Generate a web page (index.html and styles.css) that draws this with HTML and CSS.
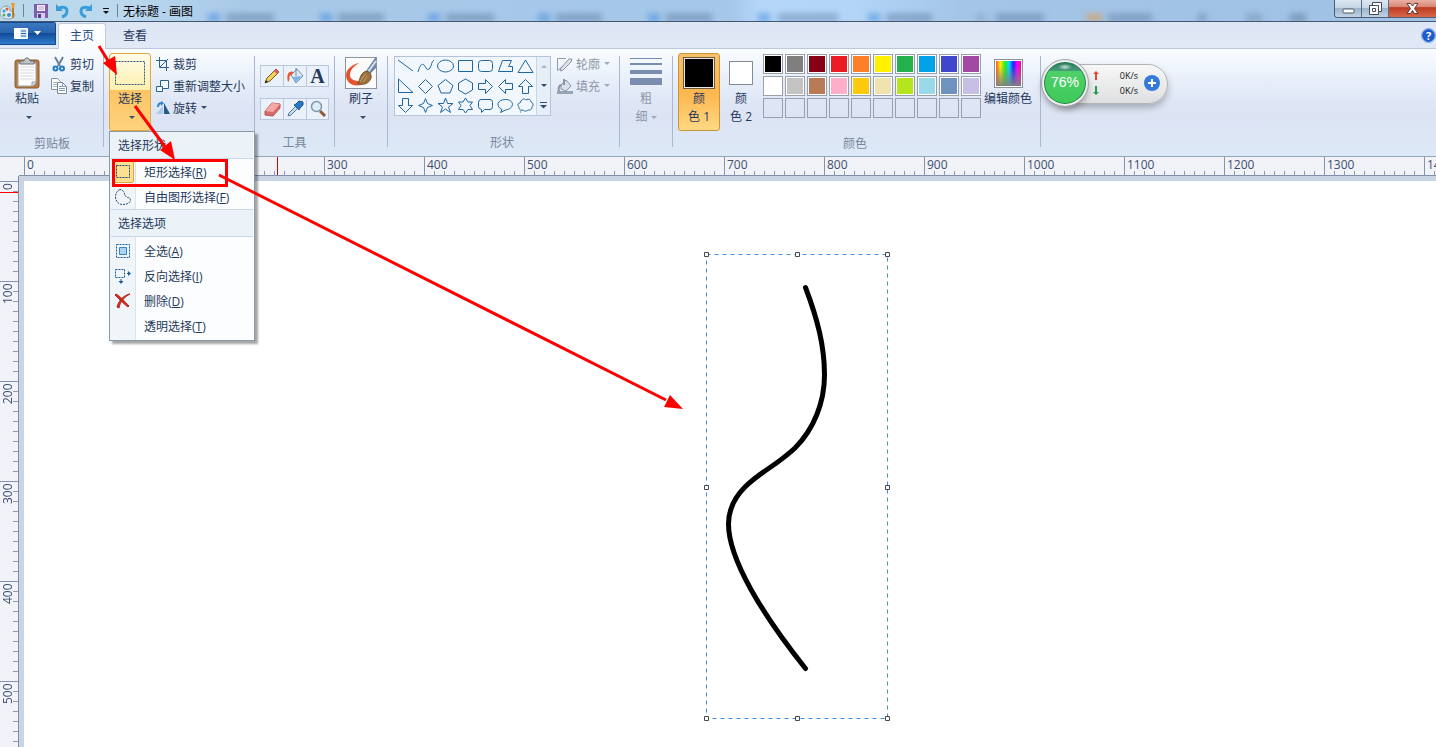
FILE: index.html
```html
<!DOCTYPE html>
<html lang="zh-CN">
<head>
    <meta charset="UTF-8">
    <meta name="viewport" content="width=device-width, initial-scale=1.0">
    <title>无标题 - 画图</title>
    <link rel="stylesheet" href="styles.css">
</head>
<body>
    <header class="titlebar">
        <div class="glass" id="glass"></div>
        <div class="quick">
            <svg class="app-icon" width="16" height="18" viewBox="0 0 16 18">
                <path d="M7 4C2 4 0 8 0 11c0 4 4 6 8 6 5 0 7-3 6-6-1-2-4-1-4-3 0-3-1-4-3-4z" fill="#dce9ef" stroke="#7fa0ae"/>
                <circle cx="4" cy="9" r="1.6" fill="#34a5d8"/><circle cx="7" cy="7" r="1.5" fill="#e2543c"/>
                <circle cx="4" cy="13" r="1.5" fill="#5cb050"/><circle cx="9" cy="13" r="2" fill="#3c8fd0"/>
                <path d="M13 3v13" stroke="#c97a20" stroke-width="2"/><path d="M11 1h4l-1 5h-2z" fill="#ef9b35"/>
            </svg>
            <span class="divider"></span>
            <button class="quick-btn" aria-label="保存">
                <svg width="14" height="14" viewBox="0 0 14 14">
                    <path d="M0 0h14v14H1L0 13z" fill="#7e5cae"/><path d="M3 1h8v6H3z" fill="#f2effa"/>
                    <path d="M4 3h6M4 5h6" stroke="#b7a8d4"/><path d="M3 9h8v5H3z" fill="#d7cdea"/><path d="M4 10h3v4H4z" fill="#574085"/>
                </svg>
            </button>
            <button class="quick-btn" aria-label="撤消">
                <svg width="14" height="14" viewBox="0 0 14 14"><path d="M3 4c5-2 8 0 8 3 0 3-2 5-5 6" fill="none" stroke="#3b9cdb" stroke-width="3"/><path d="M0 0v7h7z" fill="#3b9cdb"/></svg>
            </button>
            <button class="quick-btn" aria-label="重做">
                <svg width="14" height="14" viewBox="0 0 14 14"><path d="M11 4C6 2 3 4 3 7c0 3 2 5 5 6" fill="none" stroke="#3b9cdb" stroke-width="3"/><path d="M14 0v7H7z" fill="#3b9cdb"/></svg>
            </button>
            <button class="quick-btn quick-more" aria-label="自定义快速访问工具栏">
                <svg width="8" height="6" viewBox="0 0 8 6"><path d="M1 .5h6" stroke="#111"/><path d="M1 3h6L4 6z" fill="#111"/></svg>
            </button>
            <span class="divider"></span>
        </div>
        <h1 class="title">无标题 - 画图</h1>
        <div class="window-buttons">
            <button aria-label="最小化"><svg width="13" height="6"><rect x="1" y="1" width="11" height="4" rx="1" fill="#fff" stroke="#555d6b"/></svg></button>
            <button aria-label="还原"><svg width="13" height="13"><path d="M3.500.5h9v9h-3v3h-9v-9h3z" fill="#fff" stroke="#444c58"/><path d="M3.500 6.500h3v3h-3zM3 3.500h6.500V9" fill="none" stroke="#444c58"/></svg></button>
            <button class="close" aria-label="关闭"><svg width="13" height="11"><path d="M1 .500h3.500l2 2.500 2-2.500H12L8.500 5.500l3.500 5H8.500l-2-3-2 3H1l3.500-5z" fill="#fff" stroke="#5b3a3c"/></svg></button>
        </div>
    </header>

    <nav class="tabs">
        <button class="file-btn" aria-label="画图">
            <svg width="28" height="13" viewBox="0 0 28 13">
                <path d="M.5 1.500h13v10H.5z" fill="#dcecfb" stroke="#fff"/><path d="M1 2h5v9H1z" fill="#fff"/>
                <path d="M7 4h5M7 6.500h5M7 9h5" stroke="#2a65ad"/><path d="M20 4h7l-3.500 4z" fill="#fff"/>
            </svg>
        </button>
        <button class="tab active">主页</button>
        <button class="tab">查看</button>
        <button class="help" aria-label="帮助">?</button>
    </nav>

    <section class="ribbon">
        <div class="group clipboard">
            <div class="group-body">
                <button class="big">
                    <span class="big-icon">
                        <svg width="26" height="32" viewBox="0 0 26 32">
                            <rect x="1" y="3" width="24" height="28" rx="2" fill="#b67a3c" stroke="#8d5c2c"/>
                            <path d="M4 6h18v20l-3 3H4z" fill="#fdfdfd" stroke="#9aa3ad"/><path d="M22 25h-4v4" fill="#ccd5df" stroke="#9aa3ad"/>
                            <path d="M6 10h14M6 13h14M6 16h14M6 19h14M6 22h14" stroke="#d5dae2"/>
                            <path d="M6 4h4c0-4 6-4 6 0h4v3H6z" fill="#bfc4c9" stroke="#6b7076"/>
                        </svg>
                    </span>
                    <span>粘贴</span>
                    <span class="arrow"></span>
                </button>
                <div class="rows">
                    <button class="row"><svg width="16" height="16" viewBox="0 0 16 16"><path d="M4 1l5 9M12 1L7 10" stroke="#68829b" stroke-width="2"/><circle cx="4.500" cy="12.500" r="2" fill="none" stroke="#247cc2" stroke-width="2"/><circle cx="11" cy="12.500" r="2" fill="none" stroke="#247cc2" stroke-width="2"/></svg>剪切</button>
                    <button class="row"><svg width="16" height="16" viewBox="0 0 16 16"><path d="M.5.5h6l3 3v8h-9z" fill="#fff" stroke="#8792a0"/><path d="M2 4.500h4M2 6.500h4M2 8.500h4" stroke="#9fb7d4"/><path d="M6.500 4.500h5l4 4v7h-9z" fill="#fff" stroke="#7c8897"/><path d="M11.500 4.500v4h4M8 8.500h3M8 10.500h6M8 12.500h6" fill="none" stroke="#7f9bbd"/></svg>复制</button>
                </div>
            </div>
            <div class="group-label">剪贴板</div>
        </div>

        <div class="group image">
            <div class="group-body">
                <div class="dropdown">
                    <button class="big select-btn" aria-expanded="true">
                        <span class="big-icon"><svg width="32" height="26"><rect x="1.500" y="1.500" width="29" height="23" fill="none" stroke="#33567f" stroke-dasharray="2 1"/></svg></span>
                        <span>选择</span>
                        <span class="arrow"></span>
                    </button>
                    <div class="menu">
                        <div class="menu-title">选择形状</div>
                        <button class="menu-item checked"><span class="menu-icon"><svg width="16" height="16"><path d="M1.500 1.500h13v12h-13z" fill="none" stroke="#23486f" stroke-dasharray="2 1"/></svg></span><span>矩形选择(<u>R</u>)</span></button>
                        <button class="menu-item"><span class="menu-icon"><svg width="16" height="16"><path d="M5 .5C3 1 .5 4 .5 8c0 4 3 7.500 7 7.500 4 0 7-1 8-4 0-2-1-3-3-3-3-1-2-3-4-6-1-1-2-2-3.500-2z" fill="none" stroke="#23486f" stroke-dasharray="2 1"/></svg></span><span>自由图形选择(<u>F</u>)</span></button>
                        <div class="menu-title second">选择选项</div>
                        <button class="menu-item"><span class="menu-icon"><svg width="16" height="16"><path d="M1.500 1.500h13v13h-13z" fill="none" stroke="#1b5d9b" stroke-dasharray="2 1"/><path d="M4.500 4.500h7v7h-7z" fill="#a8d5f6" stroke="#3a83c2"/></svg></span><span>全选(<u>A</u>)</span></button>
                        <button class="menu-item"><span class="menu-icon"><svg width="16" height="16"><path d="M.5 1.500h9v8h-9z" fill="none" stroke="#1b5d9b" stroke-dasharray="2 1"/><path d="M12 5.500h2M6 11v3" stroke="#1b5d9b"/><path d="M13 3l3 2.500L13 8zM3.500 13h5L6 16z" fill="#1b5d9b"/></svg></span><span>反向选择(<u>I</u>)</span></button>
                        <button class="menu-item"><span class="menu-icon"><svg width="16" height="16"><path d="M1 1c4 2 9 8 13 12l-1 1C9 11 4 6 0 2zM15 1C9 4 5 9 4 15l-2-1C4 7 9 2 15 1z" fill="#d9311f" stroke="#b42318"/></svg></span><span>删除(<u>D</u>)</span></button>
                        <button class="menu-item"><span class="menu-icon"></span><span>透明选择(<u>T</u>)</span></button>
                    </div>
                </div>
                <div class="rows">
                    <button class="row"><svg width="14" height="14" viewBox="0 0 14 14"><path d="M3.500 0v10.500H13M0 3.500h10.500V14M4 10l8-8" fill="none" stroke="#2a6295"/></svg>裁剪</button>
                    <button class="row"><svg width="14" height="14" viewBox="0 0 14 14"><path d="M4.500 1.500h8v8h-8z" fill="#f4fafe" stroke="#2a6295"/><path d="M.5 7.500h6v5h-6z" fill="#f4fafe" stroke="#2a6295"/></svg>重新调整大小</button>
                    <button class="row"><svg width="14" height="14" viewBox="0 0 14 14"><path d="M0 13h7V5z" fill="#a9cbe8"/><path d="M8 2l6 11H8z" fill="#245b88"/><path d="M2 6c0-3 1-4 4-4" fill="none" stroke="#2f86cc" stroke-width="2"/><path d="M5 0l3 2-3 3z" fill="#2f86cc"/></svg>旋转<span class="arrow"></span></button>
                </div>
            </div>
        </div>

        <div class="group tools">
            <div class="group-body">
                <div class="toolbox">
                    <button aria-label="铅笔"><svg width="18" height="18" viewBox="0 0 18 18"><path d="M2 16l2-5L13 2l3 3-9 9z" fill="#f6cf55" stroke="#6e5b33"/><path d="M13 2l3 3-2 2-3-3z" fill="#d95d5d"/><path d="M2 16l1-3 2 2z" fill="#222"/></svg></button>
                    <button aria-label="填充"><svg width="18" height="18" viewBox="0 0 18 18"><path d="M5 8l6-6 6 7-7 7z" fill="#dfebf8" stroke="#6f8fb5"/><path d="M7 10l9-1-6 6z" fill="#7bb0e4"/><path d="M10 1v8" stroke="#7d8791" fill="none"/><path d="M8 5C3 3 0 7 2 15c3-3 0-5 3-7z" fill="#e65a2e"/></svg></button>
                    <button class="text-tool" aria-label="文本">A</button>
                    <button aria-label="橡皮擦"><svg width="18" height="18" viewBox="0 0 18 18"><path d="M2 11l7-8 8 1v4l-7 8-8-1z" fill="#d86c6c" stroke="#b45454"/><path d="M2 11l7-8 8 1-7 8z" fill="#f5a9a6"/></svg></button>
                    <button aria-label="颜色选取器"><svg width="18" height="18" viewBox="0 0 18 18"><path d="M2 16l1-3 7-7 2 2-7 7z" fill="#c9def0" stroke="#55789b"/><path d="M8 5l2-1 3-3 4 1v3l-3 3-1 2z" fill="#2877c5" stroke="#1b568f"/></svg></button>
                    <button aria-label="放大镜"><svg width="18" height="18" viewBox="0 0 18 18"><path d="M11 11l5 5" stroke="#8c5a34" stroke-width="3"/><circle cx="7.500" cy="6.500" r="5" fill="#dceefc" stroke="#8596a8" stroke-width="1.500"/></svg></button>
                </div>
            </div>
            <div class="group-label">工具</div>
        </div>

        <div class="group brush">
            <div class="group-body">
                <button class="big">
                    <span class="big-icon">
                        <svg width="32" height="32" viewBox="0 0 32 32">
                            <rect x=".5" y=".5" width="31" height="31" fill="#fbfbfb" stroke="#8d939b"/>
                            <path d="M14 6C8 7 1 12 1 18c0 7 6 12 15 10l-1-4c-6 0-10-2-10-6 0-5 4-9 9-12z" fill="#e4532c"/>
                            <path d="M21 14L30 1h1v10l-7 7z" fill="#6f86a7"/><path d="M23 15l8-11" stroke="#d5e0ec" stroke-width="2"/>
                            <path d="M13 27c2-3 1-8 6-12 4-2 8 1 7 6-2 6-8 7-13 6z" fill="#9b713d" stroke="#76532b"/><path d="M15 25c2-3 3-6 6-8M18 25c2-2 3-4 4-6" stroke="#c9a56c" fill="none"/>
                        </svg>
                    </span>
                    <span>刷子</span>
                    <span class="arrow"></span>
                </button>
            </div>
        </div>

        <div class="group shapes">
            <div class="group-body">
                <div class="gallery">
                    <div class="gallery-grid" id="shapes"></div>
                    <div class="gallery-scroll">
                        <button aria-label="上一行"><span class="arrow up"></span></button>
                        <button aria-label="下一行"><span class="arrow"></span></button>
                        <button aria-label="更多形状"><svg width="7" height="7"><path d="M0 .5h7" stroke="#344d70"/><path d="M0 3h7L3.500 6.500z" fill="#344d70"/></svg></button>
                    </div>
                </div>
                <div class="rows">
                    <button class="row" disabled><svg width="16" height="16" viewBox="0 0 16 16"><path d="M9 2.500H.5v12l5-4" fill="none" stroke="#8f9bad"/><path d="M4 12L12 3l3 0-1 3-8 8-3 1z" fill="#dfe4ec" stroke="#8793a6"/></svg>轮廓<span class="arrow"></span></button>
                    <button class="row" disabled><svg width="16" height="16" viewBox="0 0 16 16"><path d="M0 13h16v3H0z" fill="#97a3b6"/><path d="M4 7l5-5 5 6-5 5-5-2z" fill="#dbe1ea" stroke="#8793a6"/><path d="M7 1v6M5 7c-3 0-4 3-3 6" fill="none" stroke="#8793a6" stroke-width="2"/></svg>填充<span class="arrow"></span></button>
                </div>
            </div>
            <div class="group-label">形状</div>
        </div>

        <div class="group size">
            <div class="group-body">
                <button class="big" disabled>
                    <span class="big-icon"><svg width="32" height="32"><path d="M0 1h32v1H0zM0 6h32v2H0zM0 13h32v4H0zM0 21h32v7H0z" fill="#7a8dae"/></svg></span>
                    <span>粗</span>
                    <span class="with-arrow">细<span class="arrow"></span></span>
                </button>
            </div>
        </div>

        <div class="group colors">
            <div class="group-body">
                <button class="big color-slot chosen"><span class="big-icon"><span class="well primary"></span></span><span>颜</span><span>色 1</span></button>
                <button class="big color-slot"><span class="big-icon"><span class="well"></span></span><span>颜</span><span>色 2</span></button>
                <div class="palette" id="palette"></div>
                <button class="big edit-colors"><span class="big-icon"><span class="rainbow"></span></span><span>编辑颜色</span></button>
            </div>
            <div class="group-label">颜色</div>
        </div>
    </section>

    <div class="ruler-x"><div class="scale" id="scale-x"></div><span class="cursor-x"></span></div>
    <main class="workspace">
        <div class="ruler-y"><div class="scale" id="scale-y"></div><span class="cursor-y"></span></div>
        <div class="desk">
            <div class="canvas">
                <svg class="drawing" width="200" height="480" viewBox="0 0 200 480">
                    <rect x="10.500" y="8.500" width="181" height="464" fill="none" stroke="#3a8cee" stroke-dasharray="4 4"/>
                    <path d="M109.500 41.500C121 72 128.500 99 128.500 129C128.500 156 118 183 99 202C80 220 65 225 49 241C38 252 32.500 264 32.500 278C32.500 313 66 368 109.500 422.500" fill="none" stroke="#000" stroke-width="5" stroke-linecap="round"/>
                    <g fill="#fff" stroke="#434a54">
                        <path d="M8.500 6.500h4v4h-4zM99.500 6.500h4v4h-4zM189.500 6.500h4v4h-4z"/>
                        <path d="M8.500 239.500h4v4h-4zM189.500 239.500h4v4h-4z"/>
                        <path d="M8.500 470.500h4v4h-4zM99.500 470.500h4v4h-4zM189.500 470.500h4v4h-4z"/>
                    </g>
                </svg>
            </div>
        </div>
    </main>

    <!-- floating memory / network monitor -->
    <aside class="monitor">
        <div class="ball">76%</div>
        <div class="speeds">
            <svg width="6" height="9"><path d="M3 0l3 3H4v6H2V3H0z" fill="#e8443a"/></svg><span>0K/s</span>
            <svg width="6" height="9"><path d="M3 9l3-3H4V0H2v6H0z" fill="#249a53"/></svg><span>0K/s</span>
        </div>
        <button class="plus" aria-label="加速"><svg width="10" height="10"><path d="M5 1v8M1 5h8" stroke="#fff" stroke-width="2"/></svg></button>
    </aside>

    <!-- step arrows -->
    <svg class="steps" width="700" height="420" viewBox="0 0 700 420">
        <g stroke="#f00" stroke-width="3" fill="none">
            <path d="M99 46L110 64M135 106L166 148M219 175L666 400"/>
            <rect x="113.500" y="160.500" width="113" height="25"/>
        </g>
        <path d="M117 75L103 63l12-7zM175 160l-15-10 11-9zM683 409l-19-2 6-12z" fill="#f00"/>
    </svg>

    <script src="script.js"></script>
</body>
</html>
```

FILE: styles.css
```css
* {
    box-sizing: border-box;
}

body {
    margin: 0;
    height: 100vh;
    display: flex;
    flex-direction: column;
    overflow: hidden;
    position: relative;
    font-family: "Open Sans", "Noto Sans CJK SC", sans-serif;
    font-size: 12px;
    color: #1e395b;
    background: #c9d4e5;
}

button {
    font: inherit;
    color: inherit;
    background: none;
    border: 0;
    padding: 0;
    display: flex;
    align-items: center;
    justify-content: center;
}

svg {
    display: block;
    flex: none;
}

/* title bar */
.titlebar {
    flex: none;
    height: 22px;
    display: flex;
    align-items: center;
    position: relative;
    overflow: hidden;
    border-bottom: 1px solid #46566e;
    background: linear-gradient(90deg, #b9d8e8 0, #bcd9ee 110px, #a9c9e8 240px, #a5c7e8 730px, #b5d6f8 760px, #b2d5f6 860px, #a4c5e6 960px, #9fc1e4 100%);
}

.glass {
    position: absolute;
    inset: 0;
}

.blob {
    position: absolute;
    top: 14px;
    height: 7px;
    filter: blur(3px);
    opacity: 0.7;
}

.quick {
    display: flex;
    align-items: center;
    height: 100%;
    position: relative;
}

.app-icon {
    margin-right: 7px;
}

.divider {
    width: 1px;
    height: 13px;
    background: #6d8296;
}

.quick-btn {
    width: 22px;
    height: 20px;
}

.quick .divider + .quick-btn {
    margin-left: 6px;
}

.quick-more {
    width: 20px;
    margin-right: 1px;
}

.title {
    position: relative;
    margin: 0 0 0 5px;
    font-size: 12px;
    font-weight: normal;
    color: #000;
}

.window-buttons {
    position: relative;
    display: flex;
    align-self: flex-start;
    margin-left: auto;
    height: 18px;
    border: 1px solid #4c5d75;
    border-width: 0 0 1px 1px;
    border-radius: 0 0 0 4px;
    overflow: hidden;
}

.window-buttons button {
    width: 27px;
    background: linear-gradient(#dce7f2 0, #c4d4e4 50%, #9db4cc 50%, #c0d4e8 100%);
    border-right: 1px solid #5a6b82;
}

.window-buttons button:first-child {
    padding-top: 4px;
}

.window-buttons .close {
    width: 47px;
    border-right: 0;
    background: linear-gradient(#e9b1a4 0, #d98673 40%, #bb3b22 45%, #d96848 100%);
}

/* tabs */
.tabs {
    flex: none;
    height: 27px;
    display: flex;
    align-items: stretch;
    background: linear-gradient(#dde6f4, #e2e9f6);
    border-bottom: 1px solid #bdc9da;
}

.file-btn {
    width: 56px;
    height: 23px;
    margin: 0 2px 0 0;
    border: 1px solid #15498d;
    border-left: 0;
    border-radius: 0 2px 0 0;
    background: linear-gradient(#3a78bf 0, #2863ae 50%, #134c9a 50%, #2f7ccd 100%);
}

.tab {
    width: 48px;
    margin: 1px 5px 0 0;
    padding-bottom: 2px;
    border: 1px solid transparent;
    border-bottom: 0;
    border-radius: 3px 3px 0 0;
}

.tab.active {
    margin-bottom: -1px;
    padding-bottom: 3px;
    border-color: #c1ccdc;
    background: #fbfdff;
    color: #1e4887;
}

.help {
    align-self: center;
    width: 13px;
    height: 13px;
    margin: 0 1px 0 auto;
    border-radius: 50%;
    background: #1d5bd0;
    outline: 1px solid #7ba3dc;
    color: #fff;
    font-size: 11px;
    font-weight: bold;
}

/* ribbon */
.ribbon {
    flex: none;
    height: 107px;
    display: flex;
    padding-top: 4px;
    background: linear-gradient(#fafdff 0, #eef4fc 20px, #dfe6f5 52px, #dce4f4 70px, #dce9f6 100%);
}

.group {
    flex: none;
    display: flex;
    flex-direction: column;
    padding: 0 6px 0 5px;
    position: relative;
}

.group::after {
    content: "";
    position: absolute;
    top: 3px;
    right: 0;
    width: 1px;
    height: 91px;
    background: #a9b8ce;
}

.clipboard {
    padding: 0 10px 0 6px;
}

.image {
    padding-right: 10px;
}

.shapes {
    padding: 0 10px 0 6px;
}

.colors {
    padding-right: 9px;
}

.group-body {
    display: flex;
    height: 79px;
}

.group-label {
    line-height: 26px;
    text-align: center;
    color: #77869c;
}

.clipboard .group-label {
    padding-left: 4px;
}

.big {
    width: 42px;
    height: 78px;
    display: flex;
    flex-direction: column;
    justify-content: flex-start;
    padding-top: 2px;
    border: 1px solid transparent;
    border-radius: 3px;
    line-height: 18px;
}

.big-icon {
    height: 34px;
    display: flex;
    align-items: center;
    justify-content: center;
}

.arrow {
    border: 3px solid transparent;
    border-top-color: #344d70;
    border-bottom: 0;
}

.big > .arrow {
    margin: 8px 0 0 3px;
}

.arrow.up {
    border-top: 0;
    border-bottom: 3px solid #a8b2c0;
}

.rows {
    display: flex;
    flex-direction: column;
    margin-left: 3px;
}

.row {
    height: 22px;
    padding-bottom: 1px;
    gap: 3px;
    justify-content: flex-start;
    white-space: nowrap;
}

button:disabled {
    color: #8d97a6;
}

button:disabled .arrow {
    border-top-color: #a0a9b6;
}

.image .rows {
    margin-left: 5px;
}

.shapes .rows {
    margin-left: 6px;
}

.row .arrow {
    margin-left: 1px;
}

.select-btn {
    border-color: #e3a73a;
    background: linear-gradient(#fffbe8 0, #fdf0ad 36px, #fbc565 36px, #ffd27c 100%);
}

.dropdown {
    position: relative;
}

.menu {
    position: absolute;
    top: 78px;
    left: 0;
    z-index: 5;
    width: 146px;
    padding: 0 1px 2px;
    border: 1px solid #8b98a8;
    background: linear-gradient(90deg, #f0f5fa 25px, #dbe4ee 25px, #dbe4ee 26px, #fcfdfe 26px);
    box-shadow: 3px 3px 2px rgba(0, 0, 0, 0.35);
}

.menu-title {
    height: 27px;
    padding-left: 7px;
    line-height: 27px;
    background: #ebf2f8;
    border-bottom: 1px solid #c9d7e6;
}

.menu-title.second {
    height: 28px;
    margin-bottom: 1px;
    border-top: 1px solid #c9d7e6;
}

.menu-item {
    width: 100%;
    height: 25px;
    justify-content: flex-start;
    gap: 10px;
    white-space: nowrap;
}

.menu-icon {
    width: 22px;
    height: 22px;
    margin-left: 1px;
    display: flex;
    align-items: center;
    justify-content: center;
}

.checked .menu-icon {
    border: 1px solid #e8a33d;
    border-radius: 2px;
    background: #fde08f;
}

/* tools */
.toolbox {
    display: grid;
    grid-template-columns: repeat(3, 23px);
    grid-auto-rows: 22px;
    row-gap: 11px;
    padding-top: 12px;
}

.toolbox button {
    border: 1px solid #b9c8dd;
    border-right-width: 0;
    background: #eaf1fa;
}

.toolbox button:nth-child(3n) {
    border-right-width: 1px;
}

.text-tool {
    font-family: "Liberation Serif", serif;
    font-size: 20px;
    font-weight: bold;
    line-height: 20px;
}

/* shapes gallery */
.gallery {
    display: flex;
    width: 157px;
    height: 60px;
    margin-top: 3px;
    border: 1px solid #b4c4da;
    background: #f2f7fd;
}

.gallery-grid {
    flex: 1;
    display: grid;
    grid-template-columns: repeat(7, 20px);
    align-content: space-evenly;
}

.gallery-grid button {
    height: 19px;
}

.gallery-scroll {
    width: 14px;
    display: grid;
    grid-template-rows: repeat(3, 1fr);
    border-left: 1px solid #c8d5e6;
    background: #e6eef8;
}

.with-arrow {
    display: flex;
    align-items: center;
    gap: 3px;
}

/* colours */
.chosen {
    border-color: #c79734;
    background: linear-gradient(#f9c06a, #fdb64e 50%, #ffd883);
}

.well {
    width: 24px;
    height: 24px;
    border: 1px solid #858b93;
    background: #fff;
}

.well.primary {
    width: 32px;
    height: 32px;
    border-color: #6b5a3c;
    background: #000;
    box-shadow: inset 0 0 0 1px #e8e8e8;
}

.palette {
    display: grid;
    grid-template-columns: repeat(10, 20px);
    grid-auto-rows: 20px;
    gap: 2px;
    margin: 1px 3px 0 1px;
}

.swatch {
    border: 1px solid #9aa0a9;
    box-shadow: inset 0 0 0 1px #fff;
}

.swatch.empty {
    box-shadow: none;
}

.edit-colors {
    width: 48px;
    white-space: nowrap;
}

.rainbow {
    width: 29px;
    height: 29px;
    border: 1px solid #8c929a;
    box-shadow: inset 0 0 0 1px #fff;
    background: linear-gradient(transparent 20%, #808080 100%), linear-gradient(90deg, #f33, #fe0 20%, #2e2 38%, #0df 52%, #22f 68%, #f0f 84%, #f04);
}

/* rulers */
.ruler-x {
    flex: none;
    height: 20px;
    padding-left: 24px;
    position: relative;
    border-top: 1px solid #98a5b8;
    background: linear-gradient(#7f8fab, #7f8fab) 19px bottom / 100% 1px no-repeat, #f1f3f9;
    overflow: hidden;
}

.scale {
    display: flex;
    color: #3d4f6d;
}

.ruler-x .scale {
    height: 100%;
    background: repeating-linear-gradient(90deg, #8c9ab1 0, #8c9ab1 1px, transparent 1px, transparent 10px) bottom / 100% 5px no-repeat;
}

.scale span {
    flex: none;
}

.ruler-x .scale span {
    width: 100px;
    padding-left: 2px;
    line-height: 16px;
    border-left: 1px solid #8594ad;
}

.cursor-x {
    position: absolute;
    left: 277px;
    top: 0;
    width: 1px;
    height: 18px;
    background: #d00;
}

.workspace {
    flex: 1;
    display: flex;
    min-height: 0;
}

.ruler-y {
    width: 19px;
    padding-top: 5px;
    position: relative;
    border-right: 1px solid #7f8fab;
    background: #f1f3f9;
    overflow: hidden;
}

.ruler-y .scale {
    flex-direction: column;
    height: 100%;
    background: repeating-linear-gradient(#8c9ab1 0, #8c9ab1 1px, transparent 1px, transparent 10px) right / 5px 100% no-repeat;
}

.ruler-y .scale span {
    height: 100px;
    padding-bottom: 1px;
    line-height: 16px;
    writing-mode: vertical-rl;
    transform: rotate(180deg);
    text-align: right;
    border-bottom: 1px solid #8594ad;
}

.cursor-y {
    position: absolute;
    top: 16px;
    left: 0;
    width: 18px;
    height: 1px;
    background: #f00;
}

.desk {
    flex: 1;
    min-width: 0;
    padding: 5px 0 0 5px;
}

.canvas {
    height: 100%;
    position: relative;
    background: #fff;
}

.drawing {
    position: absolute;
    left: 672px;
    top: 65px;
}

/* floating monitor */
.monitor {
    position: absolute;
    left: 1042px;
    top: 59px;
    z-index: 6;
    display: flex;
    align-items: center;
    width: 126px;
    height: 48px;
    padding-right: 8px;
    color: #111;
}

.monitor::before {
    content: "";
    position: absolute;
    inset: 5px 0 3px 10px;
    z-index: -1;
    border: 1px solid #b1b4b8;
    border-radius: 20px;
    background: linear-gradient(#f7f7f7, #dfe0e1);
    box-shadow: 0 4px 7px rgba(0, 0, 0, 0.25);
}

.ball {
    width: 46px;
    height: 46px;
    border: 2px solid #eee;
    border-radius: 50%;
    outline: 1px solid #a4a7a9;
    background: radial-gradient(ellipse 7px 3px at 50% 5px, #c5e4da, transparent), linear-gradient(#277e5d 0, #4b9a7c 9px, #4ed069 9px, #3fc959 100%);
    box-shadow: inset 0 0 0 1px #237c50, 0 4px 6px rgba(0, 0, 0, 0.3);
    color: #fff;
    font-family: "Liberation Sans", sans-serif;
    font-size: 14px;
    line-height: 40px;
    text-align: center;
}

.speeds {
    flex: 1;
    display: grid;
    grid-template-columns: 6px 1fr;
    align-items: center;
    padding: 0 6px 0 5px;
    font-size: 9px;
    line-height: 15px;
    text-align: right;
}

.plus {
    width: 16px;
    height: 16px;
    border-radius: 50%;
    background: #3479dc;
}

.steps {
    position: absolute;
    left: 0;
    top: 0;
    z-index: 10;
    pointer-events: none;
}
```

FILE: script.js
```js
const colors = [
    '#000000', '#7f7f7f', '#880015', '#ed1c24', '#ff7f27', '#fff200', '#22b14c', '#00a2e8', '#3f48cc', '#a349a4',
    '#ffffff', '#c3c3c3', '#b97a57', '#ffaec9', '#ffc90e', '#efe4b0', '#b5e61d', '#99d9ea', '#7092be', '#c8bfe7'
];
const palette = document.getElementById('palette');
for (let i = 0; i < 30; i++) {
    const swatch = document.createElement('button');
    swatch.className = colors[i] ? 'swatch' : 'swatch empty';
    swatch.setAttribute('aria-label', colors[i] || '空');
    if (colors[i]) swatch.style.backgroundColor = colors[i];
    palette.appendChild(swatch);
}

const shapes = [
    ['直线', 'M1 2l15 11'],
    ['曲线', 'M1 14C3 7 5 5 7 7s3 7 6 3c2-3 1-6 4-8'],
    ['椭圆', 'M16.500 8a8 6 0 1 1-16 0a8 6 0 1 1 16 0z'],
    ['矩形', 'M1.500 2.500h14v11h-14z'],
    ['圆角矩形', 'M4.500 2.500h8q3 0 3 3v5q0 3-3 3h-8q-3 0-3-3v-5q0-3 3-3z'],
    ['多边形', 'M5.500 2.500h9l-3 6h4v5h-14z'],
    ['三角形', 'M8.500 2L16 14.500H1z'],
    ['直角三角形', 'M1.500 1v13.500H16z'],
    ['菱形', 'M8.500 1.500L15.500 8.500l-7 7-7-7z'],
    ['五边形', 'M8.500 1.500l7.500 6-3 7.500H4L1 7.500z'],
    ['六边形', 'M8.500 1l7 4v7l-7 4-7-4V5z'],
    ['右箭头', 'M1.500 5.500h7v-4l7 7-7 7v-4h-7z'],
    ['左箭头', 'M15.500 5.500h-7v-4l-7 7 7 7v-4h7z'],
    ['上箭头', 'M5.500 15.500v-7h-4l7-7 7 7h-4v7z'],
    ['下箭头', 'M5.500 1.500v7h-4l7 7 7-7h-4v-7z'],
    ['四角星', 'M8.500 1.500l2 5 5 2-5 2-2 5-2-5-5-2 5-2z'],
    ['五角星', 'M8.500 1l2 5.500H16l-4.500 3.500 2 5.500-5-3.500-5 3.500 2-5.500L1 6.500h5.500z'],
    ['六角星', 'M8.500 1l2.500 4h4.500L13 8.500l2.500 4H11L8.500 16 6 12.500H1.500L4 8.500 1.500 5H6z'],
    ['圆角矩形标注', 'M4 2.500h9q2.500 0 2.500 3v4q0 3-2.500 3H7.500l-3 3v-3Q1.500 12 1.500 9.500v-4q0-3 2.500-3z'],
    ['椭圆形标注', 'M5 12.500C-1 10-.5 2.500 8.500 2.500s9.500 9 0 10.500l-5 2.500z'],
    ['云形标注', 'M4 4c2-3 4-2 5-1 3-2 5 0 5 2 3 1 2 4 1 5 0 3-2 3-4 3-2 2-4 1-5 0-3 1-4-1-4-3-2-2-1-4 1-4zM3 15h1']
];
const gallery = document.getElementById('shapes');
shapes.forEach(([name, path]) => {
    const item = document.createElement('button');
    item.setAttribute('aria-label', name);
    item.innerHTML = `<svg width="17" height="17" viewBox="0 0 17 17"><path d="${path}" fill="none" stroke="#1f669f"/></svg>`;
    gallery.appendChild(item);
});

function fillScale(id, max) {
    const scale = document.getElementById(id);
    for (let n = 0; n <= max; n += 100) {
        const mark = document.createElement('span');
        mark.textContent = n;
        scale.appendChild(mark);
    }
}
fillScale('scale-x', Math.floor((window.innerWidth - 24) / 100) * 100);
fillScale('scale-y', Math.floor((window.innerHeight - 181) / 100) * 100);

// blurred window contents behind the glass title bar: [left, width, colour]
const blobs = [
    [208, 12, '#478fe0'], [226, 48, '#6a89ad'], [320, 12, '#478fe0'], [338, 46, '#6a89ad'],
    [428, 12, '#478fe0'], [446, 48, '#6a89ad'], [538, 12, '#478fe0'], [556, 46, '#6a89ad'],
    [648, 12, '#478fe0'], [666, 46, '#6a89ad'], [758, 12, '#478fe0'], [778, 60, '#7291b5'],
    [868, 12, '#478fe0'], [886, 46, '#6a89ad'], [976, 10, '#8ba5c4'], [996, 48, '#6a89ad'],
    [1086, 16, '#e09a50'], [1108, 44, '#6a89ad'], [1198, 8, '#6a89ad'], [1246, 16, '#7a97b8'], [1290, 16, '#64809f']
];
const glass = document.getElementById('glass');
blobs.forEach(([left, width, color]) => {
    const blob = document.createElement('span');
    blob.className = 'blob';
    blob.style.left = left + 'px';
    blob.style.width = width + 'px';
    blob.style.backgroundColor = color;
    glass.appendChild(blob);
});
```
